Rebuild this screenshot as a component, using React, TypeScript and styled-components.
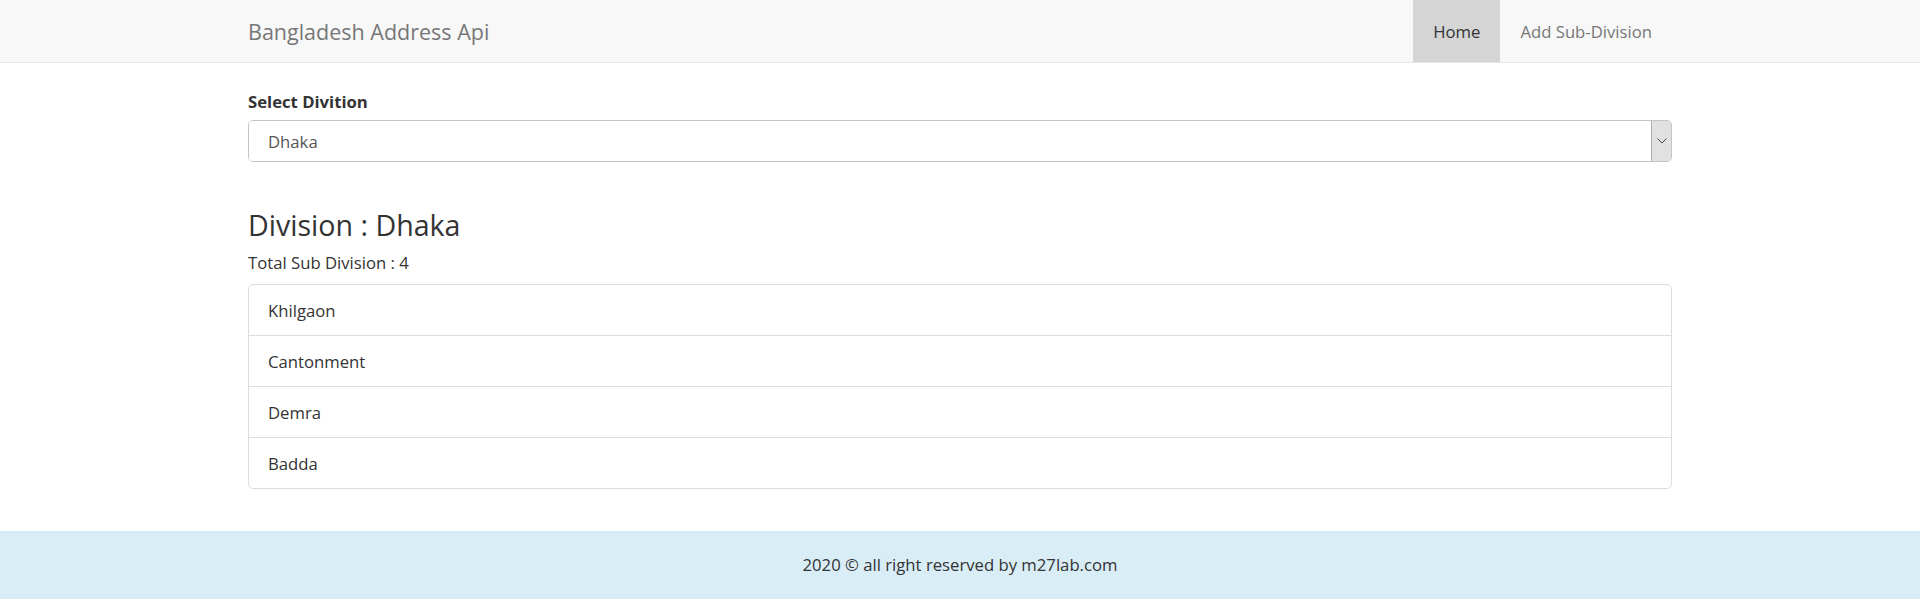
import React, { useState } from 'react';
import styled, { createGlobalStyle } from 'styled-components';

const GlobalStyle = createGlobalStyle`
  html, body {
    margin: 0;
    padding: 0;
    background: #fff;
  }
  body {
    font-family: "Open Sans", "Noto Sans", sans-serif;
    font-size: 16.7px;
    line-height: 25px;
    color: #333;
  }
  * {
    box-sizing: border-box;
  }
`;

const subDivisions: Record<string, string[]> = {
  Dhaka: ['Khilgaon', 'Cantonment', 'Demra', 'Badda'],
  Chittagong: ['Patenga', 'Halishahar'],
  Khulna: ['Sonadanga'],
};

const App = () => {
  const [division, setDivision] = useState('Dhaka');
  const list = subDivisions[division] || [];

  return (
    <>
      <GlobalStyle />
      <Navbar>
        <NavContainer>
          <Brand href="#">Bangladesh Address Api</Brand>
          <NavList>
            <NavItem active href="#">Home</NavItem>
            <NavItem href="#">Add Sub-Division</NavItem>
          </NavList>
        </NavContainer>
      </Navbar>
      <Container>
        <FormGroup>
          <Label htmlFor="division">Select Divition</Label>
          <SelectBox>
            <Select
              id="division"
              value={division}
              onChange={(e) => setDivision(e.target.value)}
            >
              {Object.keys(subDivisions).map((d) => (
                <option key={d} value={d}>{d}</option>
              ))}
            </Select>
            <SelectArrow>
              <svg width="10" height="6" viewBox="0 0 10 6">
                <path d="M0.5 0.5 L5 5 L9.5 0.5" fill="none" stroke="#444" strokeWidth="1" />
              </svg>
            </SelectArrow>
          </SelectBox>
        </FormGroup>
        <Heading>Division : {division}</Heading>
        <Total>Total Sub Division : {list.length}</Total>
        <ListGroup>
          {list.map((name) => (
            <ListItem key={name}>{name}</ListItem>
          ))}
        </ListGroup>
      </Container>
      <Footer>2020 © all right reserved by m27lab.com</Footer>
    </>
  );
};

export default App;

const Navbar = styled.nav`
  background-color: #f8f8f8;
  border-bottom: 1px solid #e7e7e7;
  margin-bottom: 26px;
`;

const NavContainer = styled.div`
  width: 1424px;
  margin: 0 auto;
  display: flex;
  justify-content: space-between;
  align-items: stretch;
  height: 62px;
`;

const Brand = styled.a`
  display: flex;
  align-items: center;
  font-size: 21.5px;
  color: #777;
  text-decoration: none;
`;

const NavList = styled.div`
  display: flex;
`;

const NavItem = styled.a<{ active?: boolean }>`
  display: flex;
  align-items: center;
  padding: 0 20px;
  color: ${(p) => (p.active ? '#333' : '#777')};
  background-color: ${(p) => (p.active ? '#d5d5d5' : 'transparent')};
  text-decoration: none;
`;

const Container = styled.main`
  width: 1424px;
  margin: 0 auto;
`;

const FormGroup = styled.div`
  margin-bottom: 0;
`;

const Label = styled.label`
  display: block;
  font-weight: 700;
  margin-bottom: 6px;
`;

const SelectBox = styled.div`
  display: flex;
  height: 42px;
  border: 1px solid #c4c4c4;
  border-radius: 5px;
  box-shadow: inset 0 1px 1px rgba(0, 0, 0, 0.075);
  overflow: hidden;
`;

const Select = styled.select`
  flex: 1;
  appearance: none;
  border: none;
  outline: none;
  background: #fff;
  font: inherit;
  color: #555;
  padding: 0 19px;
`;

const SelectArrow = styled.div`
  width: 20px;
  display: flex;
  align-items: center;
  justify-content: center;
  background: #e1e1e1;
  border-left: 1px solid #adadad;
`;

const Heading = styled.h3`
  font-size: 28.6px;
  font-weight: 400;
  line-height: 33px;
  margin: 46px 0 9px;
`;

const Total = styled.div`
  margin-bottom: 9px;
`;

const ListGroup = styled.ul`
  list-style: none;
  margin: 0 0 42px;
  padding: 0;
  border: 1px solid #ddd;
  border-radius: 5px;
`;

const ListItem = styled.li`
  padding: 12.5px 19px;
  border-top: 1px solid #ddd;
  &:first-child {
    border-top: none;
  }
`;

const Footer = styled.footer`
  background-color: #d9edf7;
  text-align: center;
  padding: 21px 0 22px;
`;
